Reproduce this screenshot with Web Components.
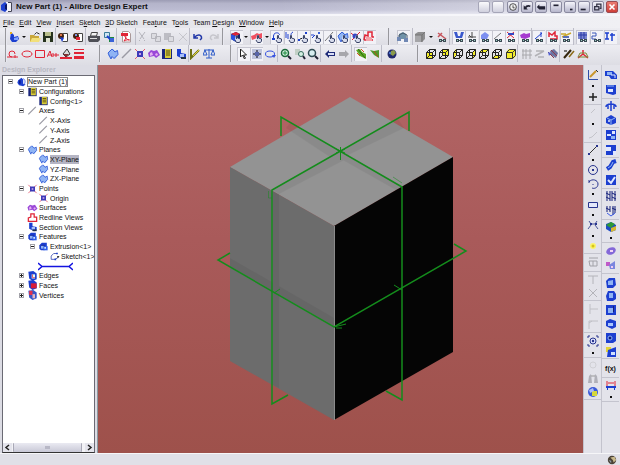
<!DOCTYPE html>
<html lang="en">
<head>
<meta charset="utf-8">
<title>New Part (1) - Alibre Design Expert</title>
<style>
  html, body { height: 100%; margin: 0; }
  body { font-family: "Liberation Sans", Arial, sans-serif; color: #111; overflow: hidden; }
</style>
</head>
<body>
<cad-app></cad-app>
<script>
const S = (d, c = '#222', w = 1, f = 'none') => `<path d="${d}" stroke="${c}" stroke-width="${w}" fill="${f}"/>`;
const F = (d, c) => `<path d="${d}" fill="${c}"/>`;
const C = (x, y, r, f, s = 'none', w = 1) => `<circle cx="${x}" cy="${y}" r="${r}" fill="${f}" stroke="${s}" stroke-width="${w}"/>`;
const BL = '#1c3fd0', NV = '#14207a', RD = '#e02436', GY = '#b4b4bb', GN = '#1d8a3c', YL = '#f4ee2a', LB = '#8fb4f4';
const glasses = F('M3 8h3v1h1v-1h3v3h-3v-1h-1v1h-3z', '#3d4c55') + F('M4 9h1v1h-1zM8 9h1v1h-1z', '#9fd0c4');
const hand = F('M6 4h2v3l3 1v2l-1 1h-4l-1-3z', '#d8dcec') + S('M6.500 8V4.500h1V7l3 1v2l-1 1.500h-3L5 9', '#3a4468', 1);
const cubeLine = '<path d="M1.500 4.500h6v6h-6zM1.500 4.500l3-3h6v6l-3 3M7.500 4.500l3-3M4.500 1.500v6l-3 3M4.500 7.500h6" fill="none" stroke="#222" stroke-width="1"/>';
const solid = (x = 0, y = 0) => `<g transform="translate(${x} ${y})">` + F('M1 4l3-3h6v6l-3 3H3L1 8z', BL) + F('M3 4h4v4H3z', LB) + S('M3 4h4v4', '#0c1c90', 1) + '</g>';
const planeShape = F('M2 3l4-2 2 2 2-1 1 5-3 4-3-2-1 2-3-4z', LB) + S('M1 5l4-4 3 3 2.500-1.500.5 4-4 4-2-2-1 2.500z', '#3a62d8', 1);
const ICONS = {
  dd: ['More', ''],
  dot: ['More', ''],
  new: ['New', F('M3 1l3 3v2l4-1 1 3-3 3H4L2 8z', BL) + F('M6 7l4-1v3H6z', '#7fa4ff') + F('M2 1h2v2H2z', '#e8b020')],
  open: ['Open', F('M1 4h4l1 1h4v6H1z', '#c9a83c') + F('M3 7h9l-2 4H1z', '#f2e07a') + S('M5.500 3.500l2-2 3 1.500', '#333')],
  save: ['Save', F('M1 1h10v10H1z', '#26321e') + F('M3 1h6v4H3z', '#b9bf8b') + F('M4 7h4v4H4z', '#dfe3d2')],
  check1: ['Check in', F('M5 2h6v9H5z', '#fff') + S('M5.500 2.500h5v8h-5', '#444') + C(4, 5, 3, '#42210f') + F('M3 6l4 1-2 4z', BL) + F('M3 3h2v2H3z', '#d8764a')],
  check2: ['Check out', F('M5 2h6v9H5z', '#fff') + S('M5.500 2.500h5v8h-5', '#444') + C(4, 5, 3, '#42210f') + F('M4 6h4v3H4z', RD) + F('M3 3h2v2H3z', '#7a94e0')],
  print: ['Print', F('M3 1h7l-1 4H2z', '#f2f2f2') + S('M3.500 1.500h6l-1 3.500h-6z', '#444') + F('M0 5h12v4l-2 2H1L0 9z', '#4e4f56') + F('M2 7h7v1H2z', '#ddd')],
  publish: ['Publish', S('M1.500 1.500h5v5h-5z', '#3a7a9a', 1, '#cfe6f2') + F('M6 6h5v5H6z', GN) + S('M4 5l4 4', BL, 2) + F('M7 7h4v4H7z', '#3a62d8')],
  pdf: ['Export PDF', S('M2.500 .5h6l2 2v8.500h-8z', '#a99', 1, '#fff') + F('M1 2h7v3H1z', RD) + S('M4 10c3-4 2-5 1-5s2 4 4 4-2-1-5 1', RD)],
  cut: ['Cut', S('M3 1l5 7M9 1L4 8M3 9.500h1M8 9.500h1', GY)],
  copy: ['Copy', S('M1.500 2.500h5v5h-5zM5.500 5.500h5v5h-5z', GY, 1, '#dcdce1')],
  paste: ['Paste', F('M1 2h7v7H1z', '#bdbdc4') + S('M5.500 5.500h5v5h-5z', GY, 1, '#dcdce1')],
  del: ['Delete', S('M2 2l8 8M10 2l-8 8', '#c6c6cc')],
  undo: ['Undo', S('M2 3v4h4M2.500 6.500C5 3 10 3 9.500 7.500L8 9', '#2238a8', 1.500)],
  redo: ['Redo', S('M10 3v4H6M9.500 6.500C7 3 2 3 2.500 7.500L4 9', '#c6c6cc', 1.500)],
  cube: ['Select part', F('M1 3l5-2 4 2v5l-4 3-5-3z', '#16206a') + F('M1 3l5 2v6l-5-3z', '#2a52e0') + F('M1 3l5-2 4 2-4 2z', RD) + hand],
  redf: ['Select face', F('M0 5l3-1 3-2 2 1 3-1v5l-3 1-2-1-5 2z', '#f05060') + hand],
  sel1: ['Select body', S('M2.500 8V5c0-4 6-4 6-1', BL) + F('M1 7h3v2H1z', BL) + hand],
  sel2: ['Select edges', S('M2 1v6M4 3v5M9 1c-2 1-2 2-2 4', BL) + hand],
  sel3: ['Select vertices', F('M1 8h2v2H1zM8 1h2v2H8z', BL) + S('M3 8l3-1') + hand],
  sel4: ['Select sketch', S('M1 4h3M2 7l3-3', BL) + F('M8 1h2v2H8z', '#3a62d8') + hand],
  sel5: ['Select axis', S('M1 10L9 1', '#777') + hand],
  sel6: ['Select plane', planeShape + hand],
  sel7: ['Select point', S('M1 2l8 7M10 1L2 9', RD) + C(5, 5, 2.500, '#3547c4') + hand],
  sel8: ['Select redline', S('M1 9l1-5 3 1V1h4v5h2M1 9h9', RD, 1.500) + F('M3 6h6v4H3z', '#f4a2a8')],
  boxh: ['Hide parts', F('M2 3l4-2 3 2v5H2z', '#6f92a8') + S('M2 8V4l4-2 4 2v4', '#456') + F('M0 6h4v4H0zM7 7h4v4H7z', '#7088b4')],
  gcube: ['Shading', F('M1 3l3-2h7v7l-3 3H1z', '#8e8e90') + F('M1 4h6v7H1z', '#a5a5a8') + S('M1 4h7v7M8 4l3-3', '#777')],
  spec: ['View detail', S('M2 2l8 6M2 6l4-4', '#c6545c', 1.500) + glasses],
  g1: ['Show planes', F('M1 1h3l1 4h2l1-4h3l-2 6H3z', '#3a58cc') + glasses],
  g2: ['Show axes', S('M6 1v6M2 6h8M3 4l2 2', '#444') + glasses],
  g3: ['Show reference', F('M2 4l4-3 4 3-2 4H2z', '#7d90f0') + glasses],
  g4: ['Show lines', S('M2 8L9 2', '#777') + glasses],
  g5: ['Show points', S('M2 1l7 6M9 1L2 7', RD) + F('M3 2h6v2H3z', '#3547c4') + glasses],
  g6: ['Show surfaces', F('M1 4l4-2 2 1 4-1v4L6 8 2 7z', '#a63bd0') + glasses],
  g7: ['Show sections', S('M2 8l7-6M8 1v5', BL) + glasses],
  g8: ['Show redlines', S('M2 6V2l3 2 3-3v4h2v3H3', RD, 1.500) + glasses],
  g9: ['Show sketch', S('M1 3h5M2 6l9-4', '#caa82c', 1.500) + F('M3 5h6v2H3z', '#5a6fb8') + glasses],
  h1: ['Show grid', F('M1 1h9v7H1z', '#7a86d0') + S('M4 1v7M7 1v7M1 4h9', '#2c3aa8') + glasses],
  h2: ['Show dimensions', S('M1 2h4v3H1v3h4', '#3b56b8') + glasses],
  h3: ['Show notes', S('M1 2h4M3 2v6M6 4h5M8 2v8M1 8h4', BL, 1.500)],
  r1: ['Sketch', S('M8 6a3 3 0 1 0-3 3h6M5 9H0M8 7v3', RD)],
  r2: ['Ellipse', '<ellipse cx="6" cy="6" rx="5" ry="3" fill="none" stroke="#e02436"/>'],
  r3: ['Rectangle', S('M1.500 2.500h9v7h-9z', RD)],
  r4: ['Text', S('M0 9l3-6 2 6M1 7h4M6 5v4M6 7h6M9 5v4', RD)],
  r5: ['Fill colour', S('M3 6l4-5 3 5-4 3z', '#333', 1, '#ddd') + F('M0 9h12v2H0z', RD) + F('M3 6h6l-3 3z', '#803030')],
  r6: ['Line width', F('M1 1h10v1H1zM1 4h10v2H1zM1 8h10v3H1z', RD)],
  plane: ['Plane', planeShape],
  axis: ['Axis', S('M1 10l9-9', '#9a9aa4', 1.500)],
  point: ['Point', S('M1 1l10 10M11 1L1 11', '#e45a70', 1) + F('M3 3h6v6H3z', '#3d3ab8') + F('M5 5h2v2H5z', '#c8a0e8')],
  surf: ['Surface', F('M0 5l3-3 3 1 3-1 3 5-4 3-2-2-5 1z', '#9a48d8') + F('M2 5l2-1 1 3-3 1zM7 6l2-1 1 2-2 1z', '#e6b0f2')],
  config: ['Configuration', F('M1 1h10v10H1z', '#1a267c') + F('M4 1h6v9H4z', '#d8cc38') + S('M5 3h4M5 5h4M5 7h4', '#554c10')],
  section: ['Section view', F('M2 1h4v4l5 1v4l-3 1-6-3z', BL) + F('M5 6h4v3H5z', '#a9c0f8') + F('M6 9h5v2H6z', '#234')],
  meas: ['Measure', S('M2 1v9l8-8', '#6d7012', 2) + S('M4 8l6-6', '#e0d238', 1)],
  scale: ['Physical properties', S('M6 1v9M3 10h6M1 2h10M2 2l-2 5h4zM10 2L8 7h4z', '#2c5ac8')],
  arrow: ['Select', S('M3.500 1v8l2-2 2 4 1-1-2-3h3z', '#222', 1, '#fff')],
  rot: ['Pan', F('M1 1h10v10H1z', '#bfc4dc') + S('M6 2v8M2 6h8', '#445', 1.500) + F('M4 4h4v4H4z', '#5a66a8')],
  orb: ['Rotate', '<ellipse cx="6" cy="6" rx="4.500" ry="3" fill="none" stroke="#3652e0"/>' + F('M8 7h4l-2 3z', '#3652e0')],
  zin: ['Zoom in', C(5, 5, 3.500, '#cfeedd', '#1a6a3a', 1.500) + S('M8 8l3 3', '#223', 2) + S('M3 5h4M5 3v4', GN, 1)],
  zwin: ['Zoom window', F('M1 1h5v6H1z', '#c2cfc6') + C(7, 6, 2.500, '#d6f0e4', '#356a5c', 1) + S('M9 8l2 3', '#223', 2)],
  zfit: ['Zoom to fit', C(5, 5, 3.500, '#d8eef0', '#2f4b52', 1.500) + S('M8 8l3 3', '#223', 2)],
  back: ['Previous view', F('M1 6l4-4v2h6v4H5v2z', '#1e2a78') + F('M4 5h6v2H4z', '#d9def6')],
  fwd: ['Next view', F('M11 6L7 2v2H1v4h6v2z', '#a7a7ac')],
  reg: ['Regenerate', F('M1 2l4-1 2 3 4 2v5L5 8z', '#5da626') + S('M3 1l7 9', '#2b6a10', 1) + S('M6 1l3 3M2 5l3 3', '#d65320', 1)],
  reg2: ['Regenerate all', F('M1 2l4 1 5-1v8L5 7z', '#4c9a2c') + S('M5 3l4 6', '#b2501c', 1)],
  globe: ['Online', C(6, 6, 4.500, '#20286c') + F('M5 3l3-1 2 3-3 3-3-2z', '#8a9a4a') + C(4, 5, 1, '#4c84e8')],
  v1: ['Front', F('M1 4h7v7H1z', YL) + cubeLine],
  v2: ['Back', F('M4 1h7v7H4z', YL) + cubeLine],
  v3: ['Left', F('M1 5l3-4v6L1 11z', YL) + cubeLine],
  v4: ['Right', F('M7 5l4-4v6l-4 4z', YL) + cubeLine],
  v5: ['Top', F('M1 5l3-4h7L8 5z', YL) + cubeLine],
  v6: ['Bottom', F('M1 11l3-4h7l-3 4z', YL) + cubeLine],
  v7: ['Isometric', F('M1 4l3-3h7v7l-3 3H1z', YL) + S('M1.500 4.500h6v6h-6zM1.500 4.500l3-3h6v6l-3 3M7.500 4.500l3-3', '#333')],
  grid: ['Grid', S('M2 1v10M5 1v10M9 1v10M1 3h10M1 7h10', '#a8a8ac')],
  snap: ['Snap', S('M1 8l9-5M2 3h8M4 9h6', '#b2b2b6', 1.500)],
  ori: ['Orient', F('M3 3l4-2 4 4-2 5-5-3z', '#6c74a0') + S('M1 4l6 6M4 2l6 6', '#8f3a50', 1) + F('M1 4l3 1-2 3z', '#4a5ad0')],
  wand: ['Render', S('M1 10l7-8', '#33260e', 2) + S('M6 9l5-6', '#8a6a18', 1.500) + F('M1 2h3v2H1z', '#777')],
  tri: ['Triad', S('M6 2v4L1 10M6 6l5 4', RD, 1.500) + S('M3 5h6l2 4H1z', '#7d8c3a', 1)],
  s1: ['Activate sketch', S('M1.500 1v9.500H11', '#2e4ea8') + S('M3 8l6-6', '#c8962c', 2) + S('M9 1l2 2', '#333', 1)],
  plus: ['Point', S('M6 2v8M2 6h8', '#222', 1.500)],
  d1: ['Line segment', S('M4 7l4-4', '#c4c4ca')],
  d2: ['Polyline', S('M2 9l3-1 5-5', '#c4c4ca')],
  line: ['Line', S('M2 10l8-8', '#333') + F('M1 9h2v2H1zM9 1h2v2H9z', '#28348e')],
  circ: ['Circle', C(6, 6, 4.500, 'none', '#28348e') + F('M5 5h2v2H5z', '#28348e')],
  arc: ['Arc', S('M2 4c3-4 9-2 9 2s-4 5-6 4M2 2v3M6 6v1', '#28348e')],
  rect: ['Rectangle', S('M1.500 3.500h9v5h-9z', '#28348e', 1, '#e4e8fa')],
  curve: ['Spline', S('M2 2l2 3h4l2-3M4 6l-3 4M8 6l3 4', '#4a5598') + F('M3 4h2v2H3zM8 4h2v2H8z', '#28348e')],
  ydot: ['Node', C(6, 6, 3, '#fbf46a') + C(6, 6, 1.500, '#d6c41c')],
  dim: ['Dimension', S('M2 2h9M2 5h8v5H3zM6 5v5', '#a2a2a8', 1)],
  trim: ['Trim', S('M1 3h10M6 3v8', '#b4b4ba')],
  ext: ['Extend', S('M2 2l8 8M10 2l-8 8', '#b4b4ba')],
  fil: ['Fillet', S('M3 1v10M3 6l8 0', '#c0c0c6')],
  chm: ['Chamfer', S('M2 11V3h9M2 5l3-2', '#c0c0c6')],
  pat: ['Pattern', C(6, 6, 3, '#dfe4ff', '#28348e') + C(6, 6, 1.200, '#28348e') + S('M1 1h2M9 1h2M1 11h2M9 11h2M1 1v2M11 1v2M1 9v2M11 9v2', '#28348e')],
  off: ['Offset', C(6, 6, 3, 'none', '#d0d0d5')],
  mir: ['Mirror', F('M2 3l2-2 1 9H1zM8 1l2 2 1 7H7z', '#b0b0b8') + S('M4 3h4', '#999')],
  ball: ['Texture', C(6, 6, 5, '#3b5ad8') + F('M5 5h5v5H5z', '#d6d83a') + F('M2 4l4-2 1 3-4 2z', '#a9bdf5')],
  f1: ['Extrude boss', F('M0 2h8l4 4v4H6L4 7H0z', BL) + F('M2 3h5v3H2z', LB) + S('M6 6h4v3', '#dfe7ff')],
  f2: ['Extrude cut', F('M1 1h10v9l-3 1-7-2z', BL) + F('M3 5h5v3H3z', '#dfe7ff') + S('M2 2h7', LB)],
  f3: ['Revolve boss', S('M1 7c0-4 10-4 10 0M6 1v10M3 4v5M9 4v5', BL, 1.500)],
  f4: ['Revolve cut', F('M6 1l5 3v5l-5 2-5-2V4z', BL) + S('M2 4l4 2 4-2M6 6v5', LB) + C(4, 7, 1, '#dfe7ff')],
  f5: ['Loft', F('M1 1h10v10H1z', BL) + F('M2 5h4v2H2zM7 2h3v3H7z', '#dfe7ff') + F('M6 7h4v3H6z', LB)],
  f6: ['Loft cut', F('M1 1h10v10H1z', BL) + F('M1 3h5v4H1zM8 7h3v4H8z', '#dfe7ff')],
  f7: ['Sweep', S('M2 10l3-2 3-5 3-1', BL, 4) + S('M3 9l3-2 2-4', LB)],
  f8: ['Sweep cut', F('M1 1h10v10H1z', BL) + S('M3 6l3 3 4-6', '#dfe7ff', 2)],
  f9: ['Helix', S('M2 1v10M5 1v10M7 1v10M10 1v10M1 3l4 2M7 3l4 2M1 7l4 2M7 7l4 2', NV)],
  f10: ['Thread', S('M2 1v6M5 1v6M8 1v9M10 1v7M1 3l4 2M7 3l4 2', NV) + S('M2 8l4 3 4-3', '#3a5ae8')],
  f11: ['Colour', F('M1 3l5-2 5 3v5l-5 2-5-3z', '#1f4cc4') + F('M1 4l5-3 4 2-4 4z', '#2f9a34') + F('M6 7l5-2v4l-5 2z', '#d8b830')],
  f12: ['Surface patch', '<ellipse cx="6" cy="6" rx="5" ry="3.500" transform="rotate(-25 6 6)" fill="#8468d8"/>' + F('M5 5h3v2H5z', '#f2d6f6')],
  f13: ['Split', F('M1 3h4v4H1z', '#c05ac8') + F('M4 6l6-4v8H5z', '#7b86de') + F('M6 7h2v2H6z', '#f0ccf2')],
  f14: ['Fillet', F('M1 4l3-3h6l1 7-3 3H2z', BL) + F('M3 4l5-1v5H3z', LB)],
  f15: ['Chamfer', F('M3 1h6l2 3v5l-3 2H2L1 6z', BL) + F('M4 3h4v5H4z', LB)],
  f16: ['Shell', F('M1 1h10v10H1z', BL) + F('M3 4h5v5H3z', LB) + S('M8.500 2v6', NV)],
  f17: ['Draft', F('M1 3l4-2 6 2v6l-4 2-6-3z', BL) + F('M3 5h5v3H3z', '#a9c6ff')],
  f18: ['Hole', F('M1 1h10v8l-3 2H1z', BL) + C(5, 6, 2, '#0b1a80', LB)],
  f19: ['Mirror feature', F('M1 1h5v5H1z', '#e3d334') + F('M3 4l8-3v10H2z', BL) + F('M6 6h4v3H6z', '#cfe0ff')],
  fx: ['Equation editor', ''],
  bom: ['Insert dimension', S('M2 2v6M10 2v6M3 4h6', RD) + F('M1 7h10v2H1zM2 9h1v2H2zM9 9h1v2H9z', BL)],
  part: ['Part', F('M2 4l4-3 2 2v5l3 1-3 2-5-1-2-3z', BL) + F('M3 4h2v4H3z', '#0c1c90') + S('M8 2c3 1 3 6 0 8', '#3a5ae8')],
  redline: ['Redline', S('M1 10V6l3-1V1h4v4h3v5z', RD, 1.500) + F('M3 6h5v2H3z', '#fff')],
  feat: ['Features', solid() + F('M6 5h5v5H6z', '#2f60e8') + F('M7 6h2v2H7z', '#cfe0ff')],
  sketch: ['Sketch', S('M9 3H5L2 6v4h5l4-3', '#3a4cae') + F('M8 2h2v2H8zM6 9h2v2H6z', BL) + F('M9 6h3l-2 3z', '#333')],
  edges: ['Edges', F('M1 1l6-1 4 3v7l-5 2-4-3z', BL) + F('M5 4h4v5H5z', '#dff') + S('M6 4v4h3', '#e04858')],
  faces: ['Faces', F('M1 1l6-1 4 3v7l-5 2-4-3z', BL) + F('M4 4h7v6H4z', '#d81c38')],
  verts: ['Vertices', F('M1 1l6-1 4 3v7l-5 2-4-3z', '#3858c8') + F('M2 1h4v5H2z', '#e2324c') + F('M6 5h3v5H6z', '#e6b6c2')]
};
const svg = (n, extra = '') => `<svg viewBox="0 0 12 12" aria-hidden="true" ${extra}>${ICONS[n][1]}</svg>`;

class ShadowElement extends HTMLElement {
  mount(html) { this.attachShadow({ mode: 'open' }).innerHTML = html; }
}

/* A run of tool buttons; its size is a share of the bar's length. */
customElements.define('tool-group', class extends ShadowElement {
  connectedCallback() {
    const vertical = this.hasAttribute('vertical');
    const names = (this.getAttribute('icons') || '').split(' ').filter(Boolean);
    const grow = this.getAttribute('size');
    this.mount(`<style>
      :host { flex: ${grow} 1 0; min-width: 0; min-height: 0; display: flex; flex-direction: ${vertical ? 'column' : 'row'};
        align-items: center; justify-content: space-around; box-sizing: border-box; }
      :host([sep]:not([vertical])) { border-right: 1px solid #bdbdc8; }
      :host([sep][vertical]) { border-bottom: 1px solid #c4c4ce; }
      :host([handle]) { border-left: 2px groove #e8e8f0; }
      button { all: unset; box-sizing: border-box; width: 13px; height: 14px; display: flex; align-items: center; justify-content: center; }
      button.w { width: 7px; }
      :host([vertical]) button { height: 13px; width: 14px; }
      :host([vertical]) button.w { height: 7px; }
      button[aria-pressed] { background: #f2f2f7; box-shadow: inset 1px 1px 0 #c6c6d0; }
      button:focus-visible { outline: 1px dotted #333; }
      svg { width: 12px; height: 12px; display: block; }
      i { display: block; border: solid transparent; border-width: 2px 2px 0; border-top-color: #111; }
      i.d { width: 2px; height: 2px; border: 0; background: #111; }
      b { font: bold 7px "Liberation Sans", Arial, sans-serif; white-space: nowrap; }
    </style>` + names.map(t => {
      const on = t.endsWith('*'), n = t.replace('*', ''), small = n === 'dd' || n === 'dot';
      const inner = n === 'dd' ? '<i></i>' : n === 'dot' ? '<i class="d"></i>' : n === 'fx' ? '<b>f(x)</b>' : svg(n);
      return `<button type="button" aria-label="${ICONS[n][0]}"${small ? ' class="w"' : ''}${on ? ' aria-pressed="true"' : ''}>${inner}</button>`;
    }).join(''));
  }
});

customElements.define('tool-bar', class extends ShadowElement {
  connectedCallback() {
    this.setAttribute('role', 'toolbar');
    this.mount(`<style>
      :host { display: flex; box-sizing: border-box; background: linear-gradient(#ededf2, #dddde4); }
      :host([vertical]) { flex-direction: column; width: 18px; background: #e3e3ea; border-left: 1px solid #c3c3cd; }
    </style><slot></slot>`);
  }
});

customElements.define('title-bar', class extends ShadowElement {
  connectedCallback() {
    const b = (label, d, cls = '') => `<button type="button" aria-label="${label}" class="${cls}"><svg viewBox="0 0 12 12">${d}</svg></button>`;
    this.mount(`<style>
      :host { display: flex; align-items: center; height: 14px; padding: 0 2px 0 1px; border-bottom: 2px solid #f6f6fa;
        background: linear-gradient(90deg, rgba(255,255,255,0) 45%, rgba(255,255,255,.55)), linear-gradient(#9c9cb4, #b4b4ca 25%, #bcbcd2 70%, #dcdcea); }
      .app { width: 12px; height: 12px; }
      h1 { flex: 1; margin: 0 0 0 3px; font-size: 8px; line-height: 14px; font-weight: bold; white-space: nowrap; }
      div { display: flex; gap: 1px; }
      span { display: flex; gap: 2px; margin-left: 2px; }
      button { all: unset; box-sizing: border-box; width: 12px; height: 12px; border: 1px solid #8a8aa0; border-radius: 2px;
        background: linear-gradient(#f4f4fa, #b6b6cc); }
      .off button { border-color: #a6a6b8; background: linear-gradient(#fafafc, #d0d0de); }
      button.close { background: linear-gradient(#ea7c72, #cf3e38); border-color: #9a4a50; }
      svg { display: block; width: 100%; height: 100%; }
    </style>
    <svg class="app" viewBox="0 0 12 12">${F('M5 1h6v10H5z', '#f2f2fa')}${S('M7 1.500h3.500v9H7', '#445')}${F('M0 4l4-3 2 2v6l-2 2-4-2z', '#1c3fd0')}${F('M4 4l2-1v6l-2-1z', '#0a1660')}</svg>
    <h1>New Part (1) - Alibre Design Expert</h1>
    <div>
      <span class="off">${b('Previous', '')}${b('Next', '')}</span>
      <span>${b('Time', C(6, 6, 4, '#eee', '#333') + S('M6 4v3h2', '#333'))}${b('Roll back', S('M4 7c1-2 3-3 6-2', '#223', 2) + F('M2 4l5 5H2z', '#223'))}${b('Pin', F('M1 6l3-3v2h7v4H4V9z', '#223'))}</span>
      <span>${b('Roll up', F('M3 3h6v2H3z', '#223'))}${b('Tray', F('M6 8h3v2H6z', '#223'))}${b('Minimize', F('M2 8h6v2H2z', '#223'))}${b('Restore', S('M4.500 5V2.500h5v5H8M2 5.500h5v4H2z', '#334', 1.500))}${b('Close', S('M3 3l6 6M9 3l-6 6', '#fff', 2), 'close')}</span>
    </div>`);
  }
});

customElements.define('menu-bar', class extends ShadowElement {
  connectedCallback() {
    const items = ['_File', '_Edit', '_View', '_Insert', 'S_ketch', '_3D Sketch', 'Fea_ture', 'T_ools', 'Team _Design', '_Window', '_Help'];
    this.mount(`<style>
      :host { display: flex; gap: 5px; height: 12px; padding-left: 3px; background: linear-gradient(90deg, #e2e2e8, #f0f0f4); }
      button { all: unset; font-size: 7px; line-height: 11px; white-space: nowrap; }
      u { text-underline-offset: 1px; }
    </style>` + items.map(i => `<button type="button">${i.replace(/_(.)/, '<u>$1</u>')}</button>`).join(''));
  }
});

customElements.define('tree-row', class extends ShadowElement {
  connectedCallback() {
    const lvl = +this.getAttribute('level'), ex = this.getAttribute('exp'), ic = this.getAttribute('icon');
    this.setAttribute('role', 'treeitem');
    this.setAttribute('aria-level', lvl + 1);
    this.mount(`<style>
      :host { display: flex; align-items: center; min-height: 0; padding-left: ${3 + 11 * lvl}px; font-size: 7px; line-height: 9px; white-space: nowrap; }
      .e { all: unset; box-sizing: border-box; flex: none; width: 5px; height: 5px; margin: 0 3px 0 2px; background: #fff; border: 1px solid #a2a2a8; }
      .e svg { width: 3px; height: 3px; display: block; }
      .n { flex: none; width: 10px; }
      .i { flex: none; width: 11px; height: 10px; margin-right: 1px; }
      :host([selected]) span { background: #b5b5c4; }
      :host([current]) span { outline: 1px solid #888; line-height: 8px; }
    </style>
    ${ex ? `<button type="button" class="e" aria-label="${ex === '+' ? 'Expand' : 'Collapse'}"><svg viewBox="0 0 3 3">${F(ex === '+' ? 'M0 1h3v1H0zM1 0h1v3H1z' : 'M0 1h3v1H0z', '#222')}</svg></button>` : '<div class="n"></div>'}
    ${ic === 'bar' ? `<svg viewBox="0 0 35 9" width="35" height="9">${S('M0 1l4 3.500L0 8M4 4.500h27M35 1l-4 3.500L35 8', '#1414e0', 1.500)}</svg>` : svg(ic, 'class="i"')}
    <span><slot></slot></span>`);
  }
});

customElements.define('design-explorer', class extends ShadowElement {
  connectedCallback() {
    const rows = [
      [0, '-', 'part', 'New Part (1)', 'current'], [1, '-', 'config', 'Configurations'], [2, '', 'config', 'Config&lt;1&gt;'],
      [1, '-', 'axis', 'Axes'], [2, '', 'axis', 'X-Axis'], [2, '', 'axis', 'Y-Axis'], [2, '', 'axis', 'Z-Axis'],
      [1, '-', 'plane', 'Planes'], [2, '', 'plane', 'XY-Plane', 'selected'], [2, '', 'plane', 'YZ-Plane'], [2, '', 'plane', 'ZX-Plane'],
      [1, '-', 'point', 'Points'], [2, '', 'point', 'Origin'], [1, '', 'surf', 'Surfaces'], [1, '', 'redline', 'Redline Views'],
      [1, '', 'section', 'Section Views'], [1, '-', 'feat', 'Features'], [2, '-', 'feat', 'Extrusion&lt;1&gt;'], [3, '', 'sketch', 'Sketch&lt;1&gt;'],
      [2, '', 'bar', ''], [1, '+', 'edges', 'Edges'], [1, '+', 'faces', 'Faces'], [1, '+', 'verts', 'Vertices']];
    this.mount(`<style>
      :host { flex: none; width: 98px; display: flex; flex-direction: column; box-sizing: border-box; background: #dcdce4;
        padding: 0 2px 0 2px; border-right: 1px solid #8c98a0; }
      h2 { margin: 0; font-size: 7px; line-height: 10px; color: #b8b8c2; }
      .box { flex: 1; min-height: 0; display: flex; flex-direction: column; background: #fff; border: 1px solid #6a6a74; border-bottom-color: #333; }
      .tree { display: grid; grid-auto-rows: 1fr; height: 223px; margin-top: 1px; overflow: hidden; }
      .sb { margin-top: auto; display: flex; gap: 1px; height: 9px; background: #f2f2f6; }
      .sb button { all: unset; width: 9px; background: #e4e4ec; }
      .sb svg { display: block; width: 9px; height: 9px; }
      .thumb { flex: 1; margin-right: 2px; border-radius: 1px; background: linear-gradient(#eaeaf2, #c8c8d6); border: 1px solid #a8a8b6; border-width: 0 1px; display: grid; place-items: center; }
      .thumb::before { content: ""; width: 5px; height: 3px; background: #b8b8c6; }
    </style>
    <h2>Design Explorer</h2>
    <div class="box"><div class="tree" role="tree">${rows.map(([l, e, i, t, f]) =>
      `<tree-row level="${l}" exp="${e}" icon="${i}" ${f || ''}>${t}</tree-row>`).join('')}</div>
      <div class="sb"><button type="button" aria-label="Scroll left"><svg viewBox="0 0 9 9">${S('M6 2L3 4.500 6 7', '#222', 1.500)}</svg></button><div class="thumb"></div><button type="button" aria-label="Scroll right"><svg viewBox="0 0 9 9">${S('M3 2l3 2.500L3 7', '#222', 1.500)}</svg></button></div>
    </div>`);
  }
});

customElements.define('model-view', class extends ShadowElement {
  connectedCallback() {
    this.mount(`<style>
      :host { flex: 1; min-width: 0; min-height: 0; display: block; background: linear-gradient(#b36666, #a95a5a 45%, #9e514b); overflow: hidden; }
      svg { display: block; width: 100%; height: 100%; }
    </style>
    <svg viewBox="98 65 485 388" role="img" aria-label="Extruded block with its three reference planes">
      <polygon points="350,97 453,157 334,226 230,167" fill="#939393"/>
      <polygon points="230,167 334,226 334,420 230,361" fill="#6c6c6c"/>
      <polygon points="334,226 453,157 453,352 334,420" fill="#050505"/>
      <g fill="#000" opacity=".05">
        <polygon points="290,123 340,151 330,157 286,128"/><polygon points="340,151 402,186 396,190 334,155"/>
        <polygon points="272,190 340,151 350,157 279,194"/><polygon points="340,151 398,119 404,128 346,156"/>
        <polygon points="273,191 279,194 279,388 273,385"/><polygon points="230,258 334,318 334,326 230,266"/>
      </g>
      <path d="M334.500 226v194" stroke="#8b8b8b" fill="none"/>
      <g fill="none" stroke="#148c1c" stroke-width="1.500">
        <path d="M281 136V117L402 187V400L386 391"/>
        <path d="M409 131V112L272 190V404L288 395"/>
        <path d="M230 253L218 260 334 327 466 251 454 244"/>
      </g>
      <g fill="none" stroke="#148c1c">
        <path d="M340.500 147v13M336 149l9 4M336 153l9-4M274 293l6-4M394 285l8 5M334 327l12-3M336 328h6"/>
        <path d="M268.500 191v7h3M393 177l9 6" opacity=".5"/>
      </g>
    </svg>`);
  }
});

customElements.define('status-bar', class extends ShadowElement {
  connectedCallback() {
    this.setAttribute('role', 'status');
    this.mount(`<style>
      :host { display: flex; justify-content: flex-end; align-items: center; height: 12px; box-sizing: border-box; padding-right: 3px;
        background: #e0e0e7; border-top: 1px solid #f6f6f8; }
      svg { width: 10px; height: 10px; }
    </style><svg viewBox="0 0 12 12">${C(6, 6, 5, '#4a4236')}${F('M4 3l5-1 2 4-3 3-1-3z', '#c9b98c')}${F('M2 6l3 1v3z', '#8d9dae')}</svg>`);
  }
});

customElements.define('cad-app', class extends ShadowElement {
  connectedCallback() {
    const g = (size, icons = '', flags = '') => `<tool-group size="${size}" icons="${icons}" ${flags}></tool-group>`;
    const v = (size, icons = '', flags = '') => g(size, icons, 'vertical ' + flags);
    this.mount(`<style>
      :host { display: flex; flex-direction: column; height: 100vh; background: #e3e3ea; }
      .row { height: 17px; }
      .tools { height: 20px; padding-bottom: 3px; }
      main { flex: 1; min-height: 0; display: flex; }
      .edge { width: 1px; }
    </style>
    <title-bar></title-bar>
    <menu-bar></menu-bar>
    <tool-bar class="row" aria-label="Standard">
      ${g(5)}${g(49, 'new dd open save', 'sep handle')}${g(30, 'check1 check2', 'sep')}${g(31, 'print publish', 'sep')}${g(18, 'pdf', 'sep')}
      ${g(55, 'cut copy paste del', 'sep')}${g(32, 'undo redo')}${g(6, '', 'handle')}
      ${g(150, 'cube* dd redf* dd sel1* sel2* sel3* sel4* sel5* sel6* sel7* sel8*')}${g(12)}${g(5, '', 'handle')}
      ${g(18, 'boxh*', 'sep')}${g(37, 'gcube dd spec', 'sep')}${g(2)}${g(81, 'g1* g2* g3* g4* g5* g6*', 'sep')}${g(42, 'g7* g8* g9*', 'sep')}${g(2)}${g(42, 'h1* h2* h3*')}${g(3)}
    </tool-bar>
    <tool-bar class="tools" aria-label="View">
      ${g(5)}${g(81, 'r1 r2 r3 r4 r5 r6', 'handle')}${g(13)}${g(6, '', 'handle')}${g(83, 'plane axis point surf config section', 'sep')}${g(27, 'meas scale')}
      ${g(15)}${g(5, '', 'handle')}${g(41, 'arrow* rot* orb', 'sep')}${g(2)}${g(41, 'zin zwin zfit', 'sep')}${g(2)}${g(29, 'back fwd', 'sep')}${g(2)}${g(28, 'reg* reg2', 'sep')}
      ${g(20, 'globe')}${g(15)}${g(6, '', 'handle')}${g(95, 'v1 v2 v3 v4 v5 v6 v7', 'sep')}${g(2)}${g(40, 'grid snap ori', 'sep')}${g(2)}${g(28, 'wand tri')}${g(31)}
    </tool-bar>
    <main>
      <design-explorer></design-explorer>
      <model-view></model-view>
      <tool-bar vertical aria-label="Sketching">
        ${v(3)}${v(37, 's1 dot plus', 'sep')}${v(37, 'd1 dot d2', 'sep')}${v(112, 'line dot circ arc dot rect dot curve dot ydot', 'sep')}${v(17, 'dim', 'sep')}
        ${v(29, 'trim ext', 'sep')}${v(31, 'fil chm', 'sep')}${v(25, 'pat dot', 'sep')}${v(41, 'off mir ball', 'sep')}${v(54)}
      </tool-bar>
      <tool-bar vertical aria-label="Part modeling">
        ${v(2)}${v(32, 'f1 f2', 'sep')}${v(29, 'f3 f4', 'sep')}${v(29, 'f5 f6', 'sep')}${v(31, 'f7 f8', 'sep')}${v(31, 'f9 f10', 'sep')}
        ${v(23, 'f11 dot', 'sep')}${v(30, 'f12 f13', 'sep')}${v(2)}${v(85, 'f14 f15 f16 f17 f18 f19', 'sep')}${v(18, 'fx', 'sep')}${v(24, 'bom dot', 'sep')}${v(52)}
      </tool-bar>
      <div class="edge"></div>
    </main>
    <status-bar></status-bar>`);
  }
});
</script>
</body>
</html>
